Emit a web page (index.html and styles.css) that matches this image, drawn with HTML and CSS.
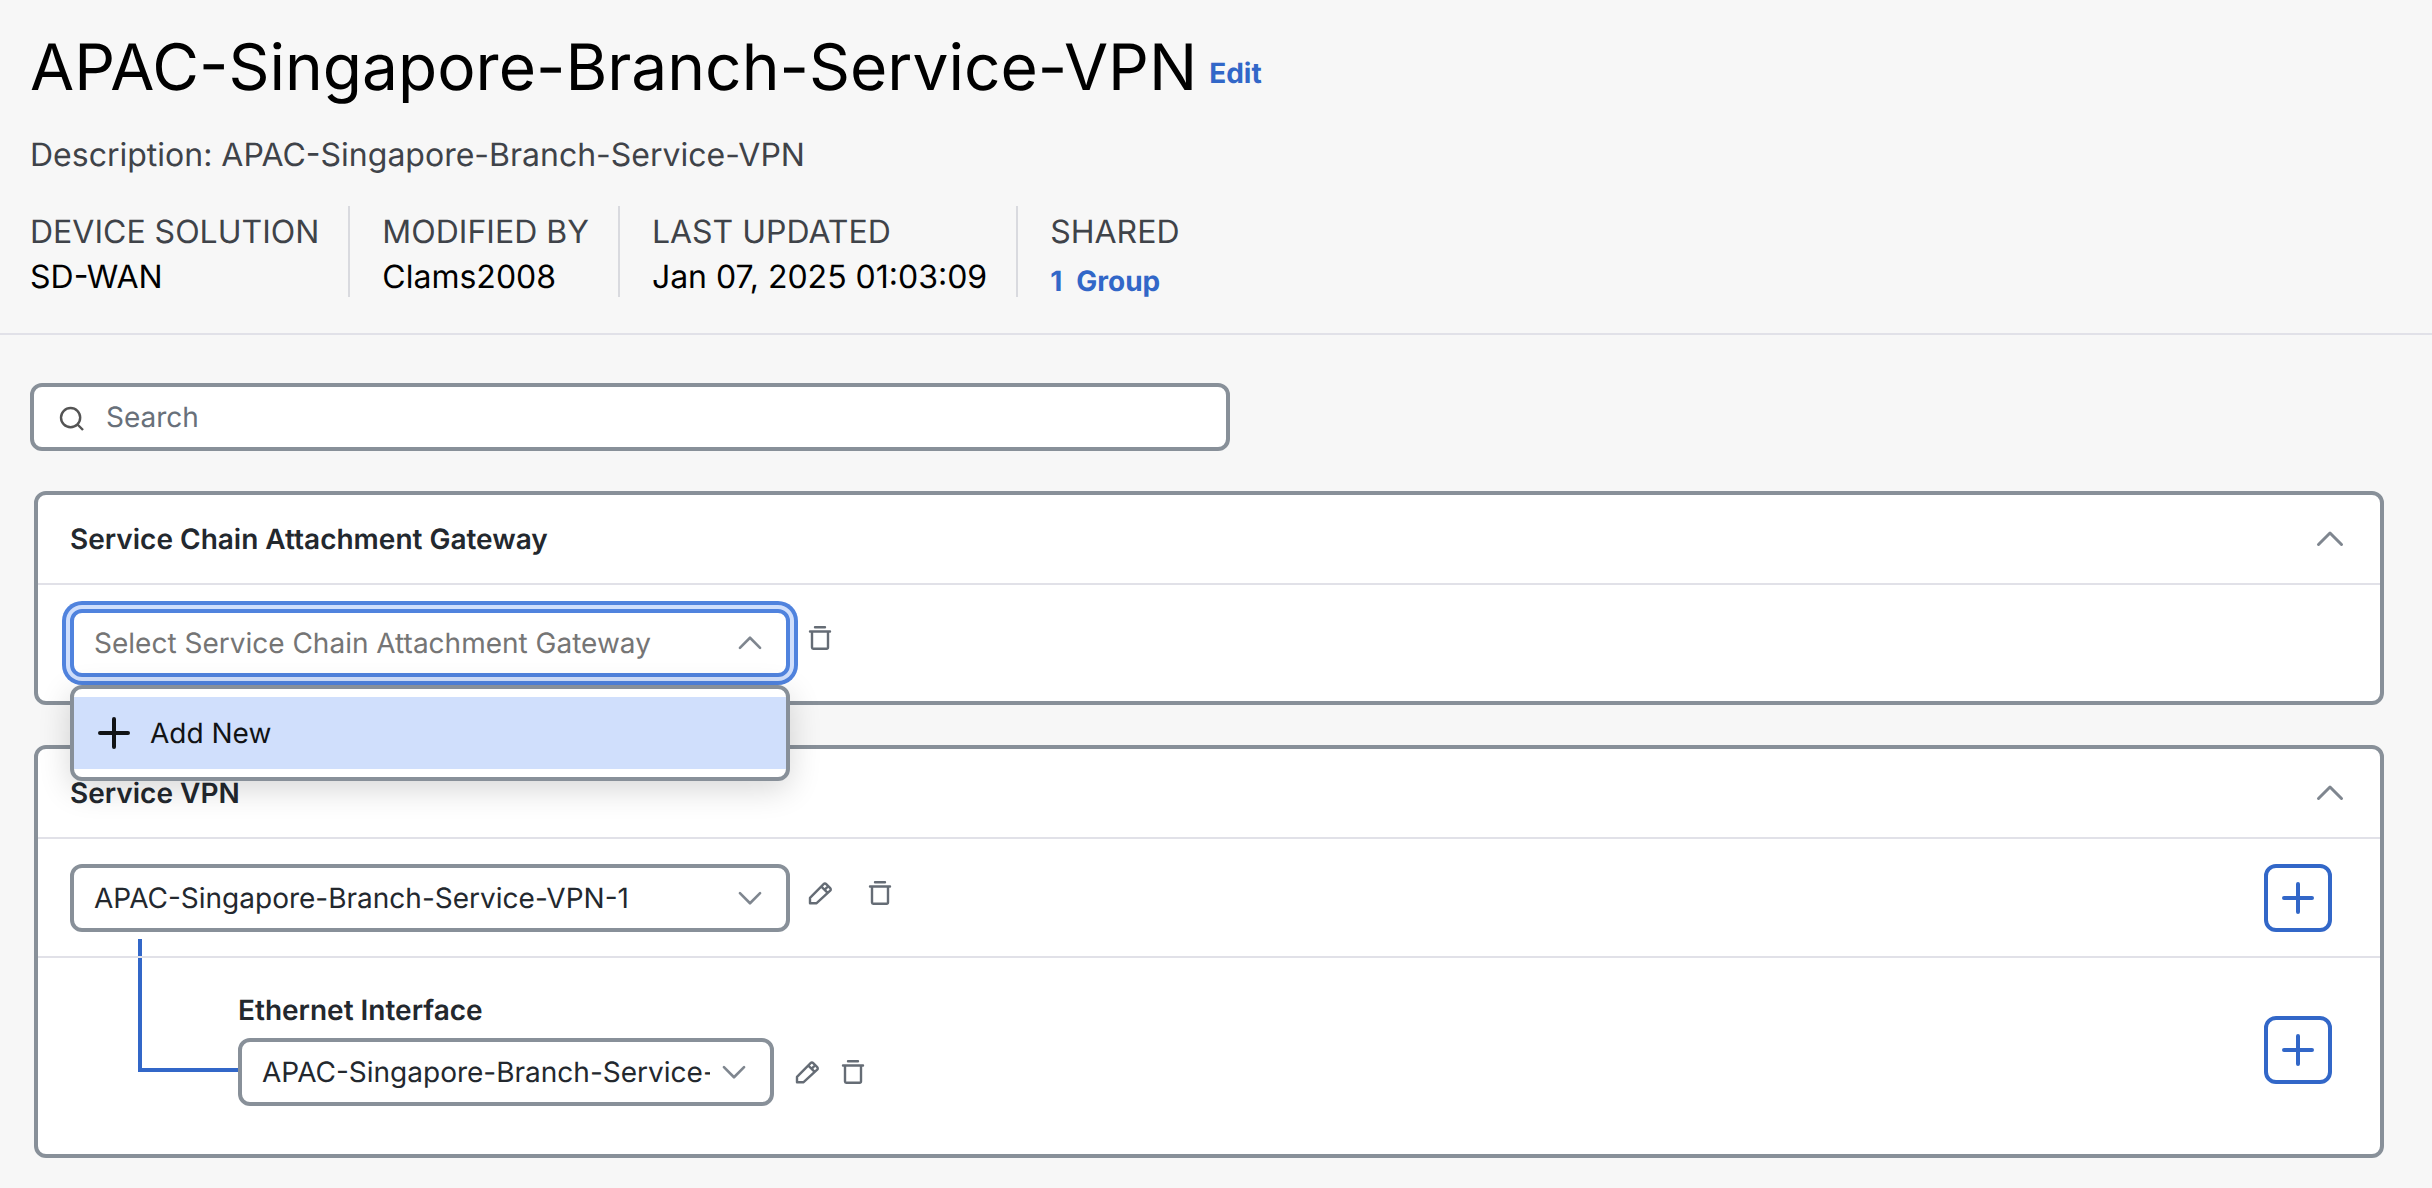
FILE: index.html
```html
<!DOCTYPE html>
<html lang="en">
<head>
<meta charset="utf-8">
<meta name="viewport" content="width=device-width, initial-scale=1">
<title>APAC-Singapore-Branch-Service-VPN</title>
<link rel="stylesheet" href="styles.css">
</head>
<body>
<svg class="sprite" aria-hidden="true">
  <symbol id="icon-trash" viewBox="0 0 32 32">
    <path d="M11 5.2h10M6 9.5h20M8 9.5V25.6a1.2 1.2 0 0 0 1.2 1.2h13.6a1.2 1.2 0 0 0 1.2-1.2V9.5"/>
  </symbol>
  <symbol id="icon-pencil" viewBox="0 0 32 32">
    <path d="M6 26.2v-5.4L19.6 7.1a1.8 1.8 0 0 1 2.6 0l4 4a1.8 1.8 0 0 1 0 2.6L12.6 26.2H6zM17.4 9.6l6 6M20.6 12.8l2.4-2.4"/>
  </symbol>
  <symbol id="icon-up" viewBox="0 0 32 32"><path d="M4.5 21.5 16 10l11.5 11.5"/></symbol>
  <symbol id="icon-down" viewBox="0 0 32 32"><path d="M4.5 10.5 16 22l11.5-11.5"/></symbol>
  <symbol id="icon-plus" viewBox="0 0 32 32"><path d="M16 2v28M2 16h28"/></symbol>
</svg>

<header class="page-header">
  <div class="title-row">
    <h1 class="title">APAC-Singapore-Branch-Service-VPN</h1>
    <button class="text-button edit" type="button">Edit</button>
  </div>
  <p class="description">Description: APAC-Singapore-Branch-Service-VPN</p>
  <dl class="meta">
    <div class="meta-item"><dt>DEVICE SOLUTION</dt><dd>SD-WAN</dd></div>
    <div class="meta-item"><dt>MODIFIED BY</dt><dd>Clams2008</dd></div>
    <div class="meta-item"><dt>LAST UPDATED</dt><dd>Jan 07, 2025 01:03:09</dd></div>
    <div class="meta-item"><dt>SHARED</dt><dd><a class="group-link" href="#groups"><span>1</span><span>Group</span></a></dd></div>
  </dl>
</header>

<main class="content">
  <div class="search">
    <svg class="search-icon" viewBox="0 0 32 32" aria-hidden="true"><circle cx="16.6" cy="16.6" r="9.6"/><path d="m23.5 23.5 5.5 5.5"/></svg>
    <input class="search-input" type="search" placeholder="Search" aria-label="Search">
  </div>

  <section class="card" aria-labelledby="gateway-title">
    <div class="card-header">
      <h2 class="heading" id="gateway-title">Service Chain Attachment Gateway</h2>
      <button class="icon-button" type="button" aria-label="Collapse"><svg class="icon chevron"><use href="#icon-up"/></svg></button>
    </div>
    <div class="row">
      <div class="field">
        <input class="control control-open" type="text" role="combobox" aria-expanded="true" aria-controls="gateway-menu" aria-labelledby="gateway-title" placeholder="Select Service Chain Attachment Gateway" readonly>
        <svg class="icon chevron chevron-small field-chevron" aria-hidden="true"><use href="#icon-up"/></svg>
        <div class="menu" id="gateway-menu">
          <button class="menu-item" type="button"><svg class="icon plus"><use href="#icon-plus"/></svg>Add New</button>
        </div>
      </div>
      <div class="actions">
        <button class="icon-button" type="button" aria-label="Delete"><svg class="icon"><use href="#icon-trash"/></svg></button>
      </div>
    </div>
  </section>

  <section class="card card-vpn" aria-labelledby="vpn-title">
    <div class="card-header">
      <h2 class="heading" id="vpn-title">Service VPN</h2>
      <button class="icon-button" type="button" aria-label="Collapse"><svg class="icon chevron"><use href="#icon-up"/></svg></button>
    </div>
    <div class="row row-parent">
      <div class="field">
        <select class="control" aria-labelledby="vpn-title"><option>APAC-Singapore-Branch-Service-VPN-1</option></select>
        <svg class="icon chevron chevron-small field-chevron" aria-hidden="true"><use href="#icon-down"/></svg>
      </div>
      <div class="actions">
        <button class="icon-button" type="button" aria-label="Edit"><svg class="icon"><use href="#icon-pencil"/></svg></button>
        <button class="icon-button" type="button" aria-label="Delete"><svg class="icon"><use href="#icon-trash"/></svg></button>
      </div>
      <button class="add-button" type="button" aria-label="Add VPN"><svg class="icon plus"><use href="#icon-plus"/></svg></button>
    </div>
    <div class="row row-nested">
      <div class="nested">
        <label class="heading" for="interface">Ethernet Interface</label>
        <div class="nested-controls">
          <div class="field field-narrow">
            <select class="control" id="interface"><option>APAC-Singapore-Branch-Service-VPN-1-Interface</option></select>
            <svg class="icon chevron chevron-small field-chevron" aria-hidden="true"><use href="#icon-down"/></svg>
          </div>
          <div class="actions actions-compact">
            <button class="icon-button" type="button" aria-label="Edit"><svg class="icon"><use href="#icon-pencil"/></svg></button>
            <button class="icon-button" type="button" aria-label="Delete"><svg class="icon"><use href="#icon-trash"/></svg></button>
          </div>
        </div>
      </div>
      <button class="add-button" type="button" aria-label="Add interface"><svg class="icon plus"><use href="#icon-plus"/></svg></button>
    </div>
  </section>
</main>
</body>
</html>
```
FILE: styles.css
```css
:root {
  --blue: #3267c8;
  --focus: #5083de;
  --highlight: #d0dffc;
  --border: #889099;
  --line: #e1e1e8;
  --text: #23282e;
  --muted: #3f4349;
  --icon: #656c75;
}

*, *::before, *::after { box-sizing: border-box; }

body {
  margin: 0;
  background: #f7f7f7;
  color: var(--text);
  font-family: Inter, "Liberation Sans", sans-serif;
  font-size: 28px;
  line-height: 34px;
  text-rendering: geometricPrecision;
}

h1, h2, p, dl, dd { margin: 0; }

button, input, select {
  font: inherit;
  color: inherit;
  text-rendering: inherit;
}

button {
  padding: 0;
  border: 0;
  background: none;
  cursor: pointer;
}

.sprite { display: none; }

/* Page header */
.page-header {
  padding: 30px 30px 36px;
  border-bottom: 2px solid var(--line);
}

.title-row {
  display: flex;
  align-items: center;
  gap: 12px;
}

.title {
  color: #000;
  font-size: 64px;
  font-weight: 400;
  line-height: 76px;
}

.text-button, .group-link {
  color: var(--blue);
  font-weight: 700;
  text-decoration: none;
}

.edit { padding-top: 10px; }

.description {
  margin-top: 29px;
  color: var(--muted);
  font-size: 32px;
  line-height: 40px;
}

.meta {
  display: flex;
  flex-wrap: wrap;
  margin-top: 31px;
  font-size: 32px;
  line-height: 40px;
}

.meta-item {
  display: flex;
  flex-direction: column;
  gap: 5px;
  padding: 6px 29px 0 32px;
  border-left: 2px solid #d9dadf;
}

.meta-item:first-child {
  padding-left: 0;
  border-left: 0;
}

.meta dt { color: var(--muted); }
.meta dd { color: #000; }

.group-link {
  display: flex;
  gap: 14px;
  padding-top: 8px;
  font-size: 28px;
  line-height: 32px;
}

/* Main content */
.content { padding: 48px 48px 30px 34px; }

.search {
  display: flex;
  align-items: center;
  gap: 20px;
  width: 100%;
  max-width: 1200px;
  height: 68px;
  margin-left: -4px;
  padding: 0 20px;
  border: 4px solid var(--border);
  border-radius: 12px;
  background: #fff;
}

.search-icon {
  flex: none;
  width: 32px;
  height: 32px;
  fill: none;
  stroke: #545454;
  stroke-width: 2.4;
}

.search-input {
  flex: 1;
  min-width: 0;
  padding: 0;
  border: 0;
  outline: 0;
  background: none;
}

.search-input::placeholder { color: #68707a; opacity: 1; }

.card {
  margin-top: 40px;
  border: 4px solid var(--border);
  border-radius: 12px;
  background: #fff;
}

.card-vpn { isolation: isolate; }

.card-header {
  display: flex;
  align-items: center;
  justify-content: space-between;
  padding: 27px 34px 27px 32px;
}

.heading {
  font-size: 28px;
  font-weight: 600;
  line-height: 34px;
}

.row {
  display: flex;
  align-items: flex-start;
  padding: 24px 48px 24px 32px;
  border-top: 2px solid var(--line);
}

.row-parent { padding-top: 25px; }

.field {
  position: relative;
  width: 720px;
}

.field-narrow { width: 536px; }

.control {
  display: block;
  width: 100%;
  height: 68px;
  padding: 0 60px 0 20px;
  border: 4px solid var(--border);
  border-radius: 12px;
  outline: 0;
  background: #fff;
  appearance: none;
}

.control::placeholder { color: #757575; opacity: 1; }

.control-open {
  border-color: var(--focus);
  box-shadow: 0 0 0 4px var(--highlight), 0 0 0 8px var(--focus);
}

.field-chevron {
  position: absolute;
  top: 20px;
  right: 26px;
  pointer-events: none;
}

.menu {
  position: absolute;
  top: calc(100% + 8px);
  left: 0;
  z-index: 10;
  width: 100%;
  padding: 8px 0;
  border: 4px solid var(--border);
  border-radius: 12px;
  background: #fff;
  box-shadow: 0 8px 32px rgba(0, 0, 0, 0.16);
}

.menu-item {
  display: flex;
  align-items: center;
  gap: 20px;
  width: 100%;
  height: 72px;
  padding: 0 24px;
  background: var(--highlight);
  color: #111315;
}

.actions {
  display: flex;
  align-items: center;
  gap: 28px;
  height: 58px;
  margin-left: 14px;
}

.actions-compact {
  gap: 14px;
  height: 68px;
  margin-left: 17px;
}

.icon-button { display: block; height: 32px; }

.add-button {
  display: flex;
  align-items: center;
  justify-content: center;
  width: 68px;
  height: 68px;
  margin-left: auto;
  border: 4px solid var(--blue);
  border-radius: 12px;
  color: var(--blue);
}

/* Nested interface row, joined to its parent by the connector */
.row-nested {
  position: relative;
  align-items: center;
  padding: 35px 48px 48px 200px;
}

.row-nested::before {
  content: "";
  position: absolute;
  top: -19px;
  left: 100px;
  z-index: -1;
  width: 100px;
  height: 133px;
  border: solid var(--blue);
  border-width: 0 0 4px 4px;
}

.nested {
  display: flex;
  flex-direction: column;
  gap: 11px;
}

.nested-controls { display: flex; }

/* Icons */
.icon {
  display: block;
  width: 32px;
  height: 32px;
  fill: none;
  stroke: var(--icon);
  stroke-width: 2.4;
  stroke-linecap: round;
  stroke-linejoin: round;
}

.chevron { stroke: #7f868f; stroke-width: 3; }
.chevron-small { width: 28px; height: 28px; }
.plus { stroke: currentColor; stroke-width: 4; }
```
